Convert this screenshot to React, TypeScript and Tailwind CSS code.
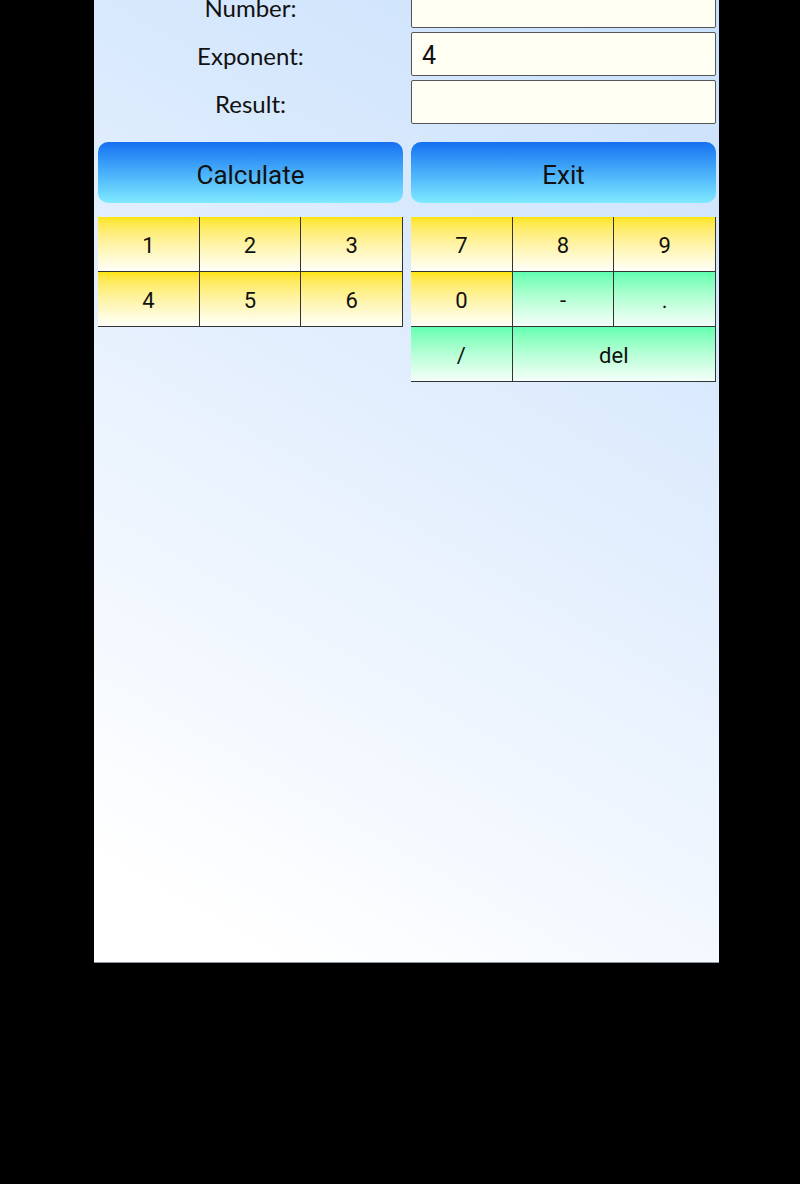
const labelFont = { fontFamily: 'Lato, "Open Sans", sans-serif' };
const roboto = { fontFamily: 'Roboto, "Liberation Sans", sans-serif' };

type Key = { label: string; color: 'yellow' | 'green'; span?: number };

const leftKeys: Key[] = [
  { label: '1', color: 'yellow' },
  { label: '2', color: 'yellow' },
  { label: '3', color: 'yellow' },
  { label: '4', color: 'yellow' },
  { label: '5', color: 'yellow' },
  { label: '6', color: 'yellow' },
];

const rightKeys: Key[] = [
  { label: '7', color: 'yellow' },
  { label: '8', color: 'yellow' },
  { label: '9', color: 'yellow' },
  { label: '0', color: 'yellow' },
  { label: '-', color: 'green' },
  { label: '.', color: 'green' },
  { label: '/', color: 'green' },
  { label: 'del', color: 'green', span: 2 },
];

function KeyCell({ k }: { k: Key }) {
  return (
    <button
      style={roboto}
      className={`h-[55px] flex items-center justify-center pt-[2px] text-[22px] text-[#111] border-r border-b border-[#333] ${
        k.color === 'yellow'
          ? 'bg-linear-to-b from-[#ffe500] to-[#fffff8]'
          : 'bg-linear-to-b from-[#5fffb0] to-[#f4fffa]'
      } ${k.span === 2 ? 'col-span-2' : ''}`}
    >
      {k.label}
    </button>
  );
}

function Field({ label, value }: { label: string; value: string }) {
  return (
    <div className="grid grid-cols-2 gap-[8px] h-[44px]">
      <div style={labelFont} className="flex items-center justify-center pt-[4px] text-[24px] text-[#111]">
        {label}
      </div>
      <div
        style={roboto}
        className="flex items-center pl-[10px] pt-[4px] text-[25px] text-[#111] bg-[#fffff4] border border-[#555] rounded-[2px]"
      >
        {value}
      </div>
    </div>
  );
}

export default function App() {
  return (
    <div className="w-[800px] h-[1184px] bg-black">
      <div className="ml-[94px] w-[625px] h-[963px] overflow-hidden border-b border-[#8a94a0] bg-linear-30 from-white from-8% via-[#e9f2fe] via-45% to-[#c8e0fb]">
        <div className="-mt-[16px] pl-[4px] pr-[3px] flex flex-col">
          <div className="flex flex-col gap-[4px]">
            <Field label="Number:" value="" />
            <Field label="Exponent:" value="4" />
            <Field label="Result:" value="" />
          </div>
          <div className="grid grid-cols-2 gap-[8px] mt-[18px]">
            <button
              style={roboto}
              className="h-[61px] pt-[6px] rounded-[10px] bg-linear-to-b from-[#1670f0] to-[#80eaff] text-[26px] text-[#111]"
            >
              Calculate
            </button>
            <button
              style={roboto}
              className="h-[61px] pt-[6px] rounded-[10px] bg-linear-to-b from-[#1670f0] to-[#80eaff] text-[26px] text-[#111]"
            >
              Exit
            </button>
          </div>
          <div className="grid grid-cols-2 gap-[8px] mt-[14px] items-start">
            <div className="grid grid-cols-3">
              {leftKeys.map((k) => (
                <KeyCell key={k.label} k={k} />
              ))}
            </div>
            <div className="grid grid-cols-3">
              {rightKeys.map((k) => (
                <KeyCell key={k.label} k={k} />
              ))}
            </div>
          </div>
        </div>
      </div>
    </div>
  );
}
